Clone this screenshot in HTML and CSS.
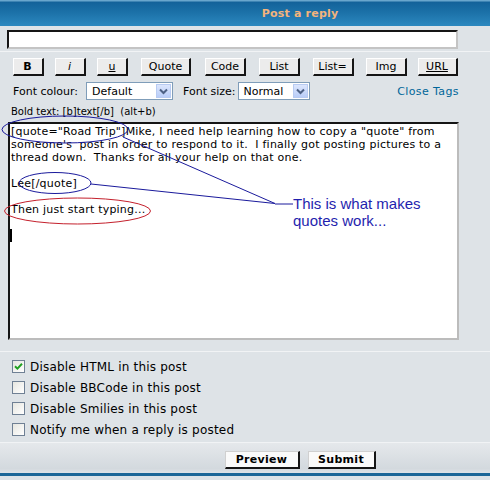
FILE: index.html
```html
<!DOCTYPE html>
<html>
<head>
<meta charset="utf-8">
<title>Post a reply</title>
<link rel="stylesheet" href="styles.css">
</head>
<body>
<div class="page">
  <div class="header">Post a reply</div>

  <div class="row subject-row">
    <div class="subject"></div>
  </div>

  <div class="row editor">
    <div class="toolbar">
      <span class="btn btn-b">B</span>
      <span class="btn btn-i">i</span>
      <span class="btn btn-u">u</span>
      <span class="btn btn-quote">Quote</span>
      <span class="btn btn-code">Code</span>
      <span class="btn btn-list">List</span>
      <span class="btn btn-list2">List=</span>
      <span class="btn btn-img">Img</span>
      <span class="btn btn-url">URL</span>
    </div>

    <div class="fontrow">
      <span class="lbl">Font colour:</span>
      <div class="select sel-colour">
        <span class="sel-text">Default</span>
        <span class="sel-arrow"><svg width="9" height="7" viewBox="0 0 9 7"><path d="M1 1.5 L4.5 5 L8 1.5" fill="none" stroke="#4d6185" stroke-width="2"/></svg></span>
      </div>
      <span class="lbl lbl-size">Font size:</span>
      <div class="select sel-size">
        <span class="sel-text">Normal</span>
        <span class="sel-arrow"><svg width="9" height="7" viewBox="0 0 9 7"><path d="M1 1.5 L4.5 5 L8 1.5" fill="none" stroke="#4d6185" stroke-width="2"/></svg></span>
      </div>
      <span class="close-tags">Close Tags</span>
    </div>

    <div class="helpline">Bold text: [b]text[/b]  (alt+b)</div>

    <div class="textarea">[quote="Road Trip"]Mike, I need help learning how to copy a "quote" from
someone's  post in order to respond to it.  I finally got posting pictures to a
thread down.  Thanks for all your help on that one.

Lee[/quote]

Then just start typing...

<span class="caret"></span></div>
  </div>

  <div class="row options">
    <div class="opt"><span class="cb checked"><svg width="11" height="11" viewBox="0 0 11 11"><path d="M2 5.2 L4.4 7.6 L9 2.8" fill="none" stroke="#21a121" stroke-width="2"/></svg></span><span>Disable HTML in this post</span></div>
    <div class="opt"><span class="cb"></span><span>Disable BBCode in this post</span></div>
    <div class="opt"><span class="cb"></span><span>Disable Smilies in this post</span></div>
    <div class="opt"><span class="cb"></span><span>Notify me when a reply is posted</span></div>
  </div>

  <div class="submit-row">
    <span class="mainbtn btn-preview">Preview</span>
    <span class="mainbtn btn-submit">Submit</span>
  </div>
  <div class="footer-line"></div>

  <svg class="annot" width="490" height="480" viewBox="0 0 490 480">
    <ellipse cx="65" cy="129.5" rx="63" ry="13.5" fill="none" stroke="#1a1a9c" stroke-width="1"/>
    <ellipse cx="55" cy="183" rx="36" ry="10.5" fill="none" stroke="#1a1a9c" stroke-width="1"/>
    <ellipse cx="77.5" cy="211" rx="73" ry="13" fill="none" stroke="#c4202c" stroke-width="1"/>
    <path d="M123 137 L275 203.5 M91 184 L275 203.5 M275 204 L293 204" fill="none" stroke="#1a1a9c" stroke-width="1"/>
  </svg>
  <div class="note">This is what makes<br>quotes work...</div>
</div>
</body>
</html>
```

FILE: styles.css
```css
* { box-sizing: border-box; }

body {
  margin: 0;
  background: #dee3e7;
  font-family: "DejaVu Sans", Verdana, sans-serif;
  color: #000;
}

.page {
  position: relative;
  width: 490px;
  height: 480px;
  overflow: hidden;
  background: #dee3e7;
}

.header {
  height: 26px;
  padding-left: 110px;
  background: linear-gradient(to bottom, #69a6cd 0, #69a6cd 1px, #13629a 2px, #1b70a7 45%, #2c88bf 100%);
  color: #f4b47c;
  font-weight: bold;
  font-size: 11px;
  line-height: 27px;
  text-align: center;
  letter-spacing: 0.2px;
}

.row {
  border-bottom: 1px solid #f1f3f5;
}

.subject-row {
  height: 26px;
  padding: 4px 0 0 7px;
}

.subject {
  width: 451px;
  height: 19px;
  background: #fff;
  border: 2px solid;
  border-color: #151515 #c4c4c4 #c4c4c4 #151515;
}

.editor {
  height: 300px;
  padding-top: 6px;
}

.toolbar {
  display: grid;
  grid-template-columns: 42px 42px 43px 64px 55px 53px 54px 53px 49px;
  justify-items: center;
  padding-left: 7px;
  height: 18px;
}

.btn {
  display: flex;
  align-items: center;
  justify-content: center;
  height: 18px;
  background: #ececec;
  border-style: solid;
  border-width: 1px 2px 2px 1px;
  border-color: #ffffff #151515 #151515 #ffffff;
  font-size: 11px;
  line-height: 1;
}

.btn-b { width: 31px; font-weight: bold; }
.btn-i { width: 31px; font-style: italic; }
.btn-u { width: 31px; text-decoration: underline; }
.btn-quote { width: 50px; }
.btn-code { width: 41px; }
.btn-list { width: 41px; }
.btn-list2 { width: 41px; }
.btn-img { width: 41px; }
.btn-url { width: 40px; text-decoration: underline; }

.fontrow {
  display: flex;
  align-items: center;
  height: 18px;
  margin-top: 6px;
  padding-left: 13px;
  padding-right: 31px;
  font-size: 11px;
}

.select {
  position: relative;
  display: flex;
  align-items: center;
  height: 18px;
  background: #fff;
  border: 1px solid #7f9db9;
  padding-left: 5px;
}

.sel-colour { width: 87px; margin-left: 8px; }
.sel-size { width: 72px; margin-left: 2px; }
.lbl-size { margin-left: 10px; }

.sel-text { flex: 1; font-size: 11px; }

.sel-arrow {
  display: flex;
  align-items: center;
  justify-content: center;
  width: 15px;
  height: 14px;
  margin-right: 1px;
  background: linear-gradient(to bottom, #dce6fd, #b9cdf8);
  border: 1px solid #b8cbf2;
}

.close-tags {
  margin-left: auto;
  color: #006699;
  letter-spacing: 0.4px;
}

.helpline {
  height: 16px;
  margin-top: 4px;
  padding-left: 11px;
  font-size: 10px;
  line-height: 16px;
  white-space: pre;
}

.textarea {
  width: 451px;
  height: 218px;
  margin: 2px 0 0 8px;
  padding: 1px 0 0 1px;
  background: #fff;
  border: 2px solid;
  border-color: #151515 #bcbcbc #bcbcbc #151515;
  font-size: 11px;
  letter-spacing: 0.22px;
  line-height: 13px;
  white-space: pre-wrap;
  overflow: hidden;
}

.caret {
  display: inline-block;
  width: 2px;
  height: 13px;
  margin-left: -1px;
  background: #000;
  vertical-align: top;
}

.options {
  height: 91px;
  padding: 4px 0 0 12px;
}

.opt {
  display: flex;
  align-items: center;
  gap: 5px;
  height: 21px;
  font-size: 12px;
  letter-spacing: 0.2px;
}

.cb {
  display: flex;
  align-items: center;
  justify-content: center;
  width: 13px;
  height: 13px;
  background: linear-gradient(135deg, #e6e6e0, #ffffff);
  border: 1px solid #6f8094;
}

.submit-row {
  display: flex;
  justify-content: center;
  gap: 8px;
  height: 30px;
  padding: 8px 0 0 110px;
  background: linear-gradient(to bottom, #e5e8eb 0, #d3d9de 85%, #dfe3e7 100%);
}

.mainbtn {
  display: flex;
  align-items: center;
  justify-content: center;
  height: 18px;
  background: #fafafa;
  border-style: solid;
  border-width: 1px 2px 2px 1px;
  border-color: #d0d0d0 #151515 #151515 #d0d0d0;
  font-size: 11px;
  font-weight: bold;
  letter-spacing: 0.3px;
}

.btn-preview { width: 75px; }
.btn-submit { width: 68px; }

.footer-line {
  height: 3px;
  background: #1c6798;
}

.annot {
  position: absolute;
  left: 0;
  top: 0;
  pointer-events: none;
}

.note {
  position: absolute;
  left: 293px;
  top: 195px;
  font-family: "Liberation Sans", Arial, sans-serif;
  font-size: 15px;
  line-height: 17px;
  color: #1f1fae;
}
```
